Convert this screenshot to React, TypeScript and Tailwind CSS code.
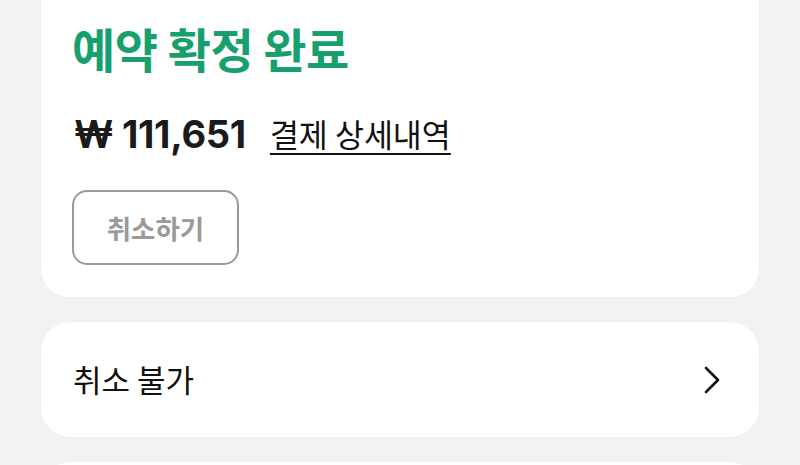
export default function App() {
  return (
    <div
      className="w-[800px] h-[465px] overflow-hidden bg-[#f2f2f3] px-[41px]"
      style={{ fontFamily: '"Noto Sans CJK KR", "Noto Sans", sans-serif' }}
    >
      <div className="flex flex-col gap-[25px] -mt-[30px]">
        <div className="bg-white rounded-[28px] pl-[31px] pt-[48px] pb-[32px] flex flex-col">
          <div className="text-[47px] leading-[60px] font-bold text-[#17a06e] tracking-[-0.5px]">
            예약 확정 완료
          </div>
          <div className="flex items-center mt-[31px] h-[50px]">
            <span
              className="text-[38px] font-bold text-[#1a1a1a] tracking-[-0.3px] ml-[2px]"
              style={{ fontFamily: 'Inter, "Noto Sans CJK KR", sans-serif' }}
            >
              ₩ 111,651
            </span>
            <span className="ml-[24px] text-[31.5px] text-[#111] underline underline-offset-[6px] decoration-[2px]">
              결제 상세내역
            </span>
          </div>
          <div className="mt-[31px]">
            <div className="w-[167px] h-[75px] rounded-[15px] border-2 border-[#9a9a9a] flex items-center justify-center text-[26.5px] font-semibold text-[#9a9a9a]">
              취소하기
            </div>
          </div>
        </div>
        <div className="bg-white rounded-[30px] h-[115px] flex items-center justify-between pl-[32px] pr-[38px]">
          <span className="text-[31px] text-[#111]">취소 불가</span>
          <svg width="18" height="28" viewBox="0 0 18 28" fill="none">
            <path d="M3 2 L15 14 L3 26" stroke="#111" strokeWidth="2.6" strokeLinecap="round" strokeLinejoin="round" />
          </svg>
        </div>
        <div className="bg-white rounded-[30px] h-[115px]" />
      </div>
    </div>
  );
}
